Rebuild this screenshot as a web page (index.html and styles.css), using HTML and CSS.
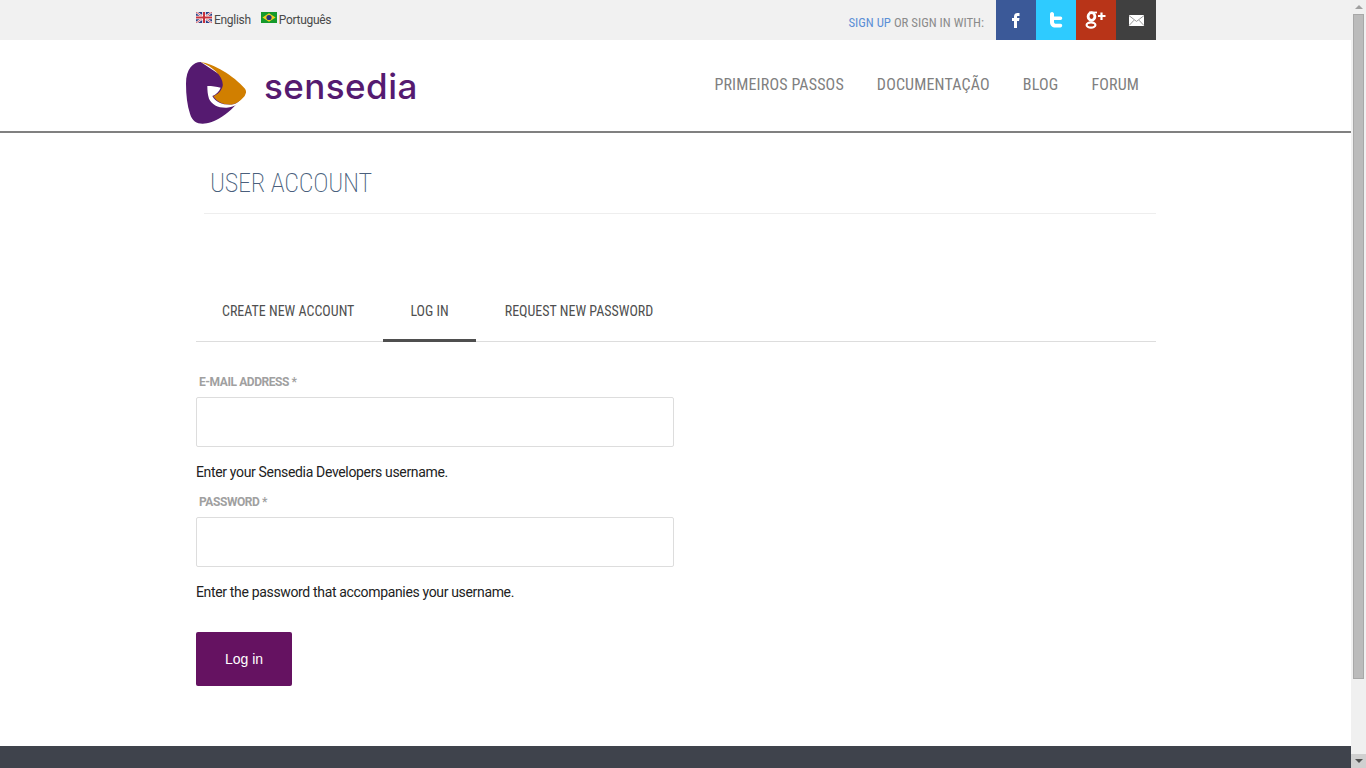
FILE: index.html
```html
<!DOCTYPE html>
<html lang="en">
<head>
<meta charset="utf-8">
<title>User account | Sensedia Developers</title>
<link rel="stylesheet" href="styles.css">
</head>
<body>
<div class="page">
  <div class="topbar">
    <div class="wrap topbar-in">
      <ul class="langs">
        <li><svg class="flag" viewBox="0 0 16 11"><rect width="16" height="11" fill="#2b3f86"/><path d="M0 0L16 11M16 0L0 11" stroke="#fff" stroke-width="2.2"/><path d="M0 0L16 11M16 0L0 11" stroke="#c8323c" stroke-width=".8"/><path d="M8 0V11M0 5.5H16" stroke="#fff" stroke-width="3.6"/><path d="M8 0V11M0 5.5H16" stroke="#c8323c" stroke-width="2"/></svg><span>English</span></li>
        <li><svg class="flag" viewBox="0 0 16 11"><rect width="16" height="11" fill="#159a2c"/><path d="M8 1.2L14.6 5.5L8 9.8L1.4 5.5Z" fill="#f0d020"/><circle cx="8" cy="5.5" r="2.6" fill="#27357e"/></svg><span>Português</span></li>
      </ul>
      <div class="social">
        <p class="signup"><a class="su">SIGN UP</a> OR SIGN IN WITH:</p>
        <a class="sq fb"><svg viewBox="0 0 40 40"><path d="M18 28V21H16V18H18V16.5C18 14 19.5 13 21.5 13H23.5V16H22C21 16 21 16.5 21 17V18H23.5L23 21H21V28Z" fill="#fff"/></svg></a>
        <a class="sq tw"><svg viewBox="0 0 40 40"><path d="M14 14C14 12.8 15 12 16 12C17.2 12 18 13 18 14V16.5H24.5C25.6 16.5 26.2 17.3 26.2 18.3C26.2 19.3 25.5 20 24.5 20H18V22C18 23 18.8 23.8 20 23.8H24.5C25.5 23.8 26.2 24.6 26.2 25.6C26.2 26.7 25.5 27.5 24.5 27.5H19.5C16 27.5 14 25.5 14 22Z" fill="#fff"/></svg></a>
        <a class="sq gp"><svg viewBox="0 0 40 40"><g fill="none" stroke="#fff"><ellipse cx="15.5" cy="16.5" rx="3.4" ry="3.8" stroke-width="2.8"/><ellipse cx="15" cy="25" rx="4.4" ry="2.6" stroke-width="2.2"/><path d="M21 12.5H13" stroke-width="1.8"/><path d="M25.5 12.5V20M22 16H29.5" stroke-width="2.2"/></g></svg></a>
        <a class="sq ml"><svg viewBox="0 0 40 40"><rect x="13" y="15" width="15" height="11" fill="#fff"/><path d="M13 15.6L20.5 21.4L28 15.6M13 25.6L18 20.2M28 25.6L23 20.2" fill="none" stroke="#808080" stroke-width=".8"/></svg></a>
      </div>
    </div>
  </div>

  <header class="header">
    <div class="wrap header-in">
      <a class="logo">
        <svg class="logo-mark" viewBox="18 20 180 186">
          <path d="M62 20C40 20 18 40 18 85C18 120 22 150 30 175C36 196 50 205 68 205C100 205 150 180 198 110Z" fill="#551a70"/>
          <path d="M62 20C100 25 160 60 195 100C200 106 198 115 194 122C185 135 170 145 155 148C135 150 110 140 100 122C112 118 124 108 128 92C132 65 100 35 62 20Z" fill="#d17f00"/>
          <path d="M82 92C96 92 110 94 122 97C118 108 108 118 97 122C106 140 130 150 155 148C170 146 185 135 194 122C184 140 165 156 140 157C115 158 95 148 87 130C83 118 82 105 82 92Z" fill="#fff"/>
        </svg>
        <span class="logo-word">sensedia</span>
      </a>
      <nav class="nav">
        <a>PRIMEIROS PASSOS</a>
        <a>DOCUMENTAÇÃO</a>
        <a>BLOG</a>
        <a>FORUM</a>
      </nav>
    </div>
  </header>

  <main class="wrap main">
    <div class="title-row"><h1>USER ACCOUNT</h1></div>
    <ul class="tabs">
      <li><a>CREATE NEW ACCOUNT</a></li>
      <li class="active"><a>LOG IN</a></li>
      <li><a>REQUEST NEW PASSWORD</a></li>
    </ul>
    <form class="form">
      <label class="label" for="name">E-MAIL ADDRESS *</label>
      <input class="input" id="name" type="text">
      <p class="help">Enter your Sensedia Developers username.</p>
      <label class="label" for="pass">PASSWORD *</label>
      <input class="input" id="pass" type="password">
      <p class="help">Enter the password that accompanies your username.</p>
      <button class="btn" type="button">Log in</button>
    </form>
  </main>
  <footer class="footer"></footer>
</div>
<div class="scrollbar" aria-hidden="true">
  <div class="arrow-up"></div>
  <div class="track"><div class="thumb"></div></div>
  <div class="arrow-down"></div>
</div>
</body>
</html>
```

FILE: styles.css
```css
* { box-sizing: border-box; }
html, body { margin: 0; height: 768px; overflow: hidden; }
body { display: flex; background: #fff; font-family: "Roboto", "Noto Sans", sans-serif; color: #222; }
ul { list-style: none; margin: 0; padding: 0; }
p, h1 { margin: 0; }

.page { width: 1351px; height: 768px; display: flex; flex-direction: column; }
.wrap { width: 960px; margin-left: 196px; }

.topbar { height: 40px; background: #f1f1f1; flex: none; }
.topbar-in { display: flex; justify-content: space-between; height: 40px; }
.langs { display: flex; gap: 10px; padding-top: 12px; font-size: 12px; letter-spacing: -.3px; color: #4a4a4a; }
.langs li { display: flex; align-items: flex-start; gap: 2px; line-height: 16px; }
.flag { width: 16px; height: 11px; }
.social { display: flex; align-items: flex-start; }
.signup { font-size: 12.8px; font-stretch: 75%; color: #8b8b8b; line-height: 16px; padding-top: 15px; margin-right: 12px; }
.su { color: #5b8fd6; }
.sq { width: 40px; height: 40px; display: block; }
.sq svg { width: 40px; height: 40px; display: block; }
.fb { background: #3b5998; }
.tw { background: #2ecbff; }
.gp { background: #b83418; }
.ml { background: #404040; }

.header { height: 93px; flex: none; background: #fff; border-bottom: 2px solid #808080; }
.header-in { display: flex; justify-content: space-between; height: 91px; }
.logo { display: flex; align-items: flex-start; margin-left: -10px; padding-top: 22px; }
.logo-mark { width: 60px; height: 62px; display: block; }
.logo-word { font-family: "Inter", sans-serif; font-weight: 500; font-size: 35px; line-height: 44px; color: #551a70; margin-left: 18px; margin-top: 2px; letter-spacing: .45px; }
.nav { display: flex; gap: 33px; padding: 35px 17px 0 0; font-size: 16px; font-stretch: 77%; letter-spacing: .15px; line-height: 20px; color: #808080; }

.main { flex: 1; }
.title-row { margin-left: 8px; height: 81px; padding: 33px 0 0 6px; border-bottom: 1px solid #eee; width: 952px; }
.title-row h1 { font-size: 26px; line-height: 34px; font-weight: 200; font-stretch: 75%; letter-spacing: -.25px; color: #4a5f7c; }
.tabs { display: flex; gap: 2px; margin-top: 68px; height: 60px; border-bottom: 1px solid #ddd; font-size: 14px; font-stretch: 75%; color: #4f4f4f; }
.tabs li { height: 60px; padding: 19px 27px 0; line-height: 20px; }
.tabs li:first-child { margin-left: -1px; }
.tabs li.active { border-bottom: 3px solid #4f4f4f; }
.form { display: flex; flex-direction: column; align-items: flex-start; padding-top: 32px; }
.label { font-size: 12px; font-weight: 700; letter-spacing: -.43px; line-height: 16px; color: #a0a0a0; margin: 0 0 7px 3px; }
.input { width: 478px; height: 50px; border: 1px solid #ddd; border-radius: 2px; background: #fff; display: block; }
.help { font-size: 14px; letter-spacing: -.34px; line-height: 20px; color: #222; margin: 15px 0 12px; }
.btn { width: 96px; height: 54px; margin-top: 18px; background: #651261; color: #fff; border: 0; border-radius: 2px; font-family: "Liberation Sans", sans-serif; font-size: 14px; }
.footer { height: 22px; flex: none; background: #3f434c; }

.scrollbar { width: 15px; height: 768px; background: #f0f0f0; display: flex; flex-direction: column; flex: none; }
.arrow-up { height: 14px; flex: none; display: flex; align-items: center; justify-content: center; }
.arrow-up::before { content: ""; border: 4px solid transparent; border-top: 0; border-bottom: 4px solid #a0a0a0; }
.track { flex: 1; padding: 0 2px; }
.thumb { height: 665px; background: #bbb; border: 1px solid #a8a8a8; }
.arrow-down { height: 14px; flex: none; background: #d0d0d0; display: flex; align-items: center; justify-content: center; }
.arrow-down::before { content: ""; border: 4px solid transparent; border-bottom: 0; border-top: 4px solid #505050; }
```
